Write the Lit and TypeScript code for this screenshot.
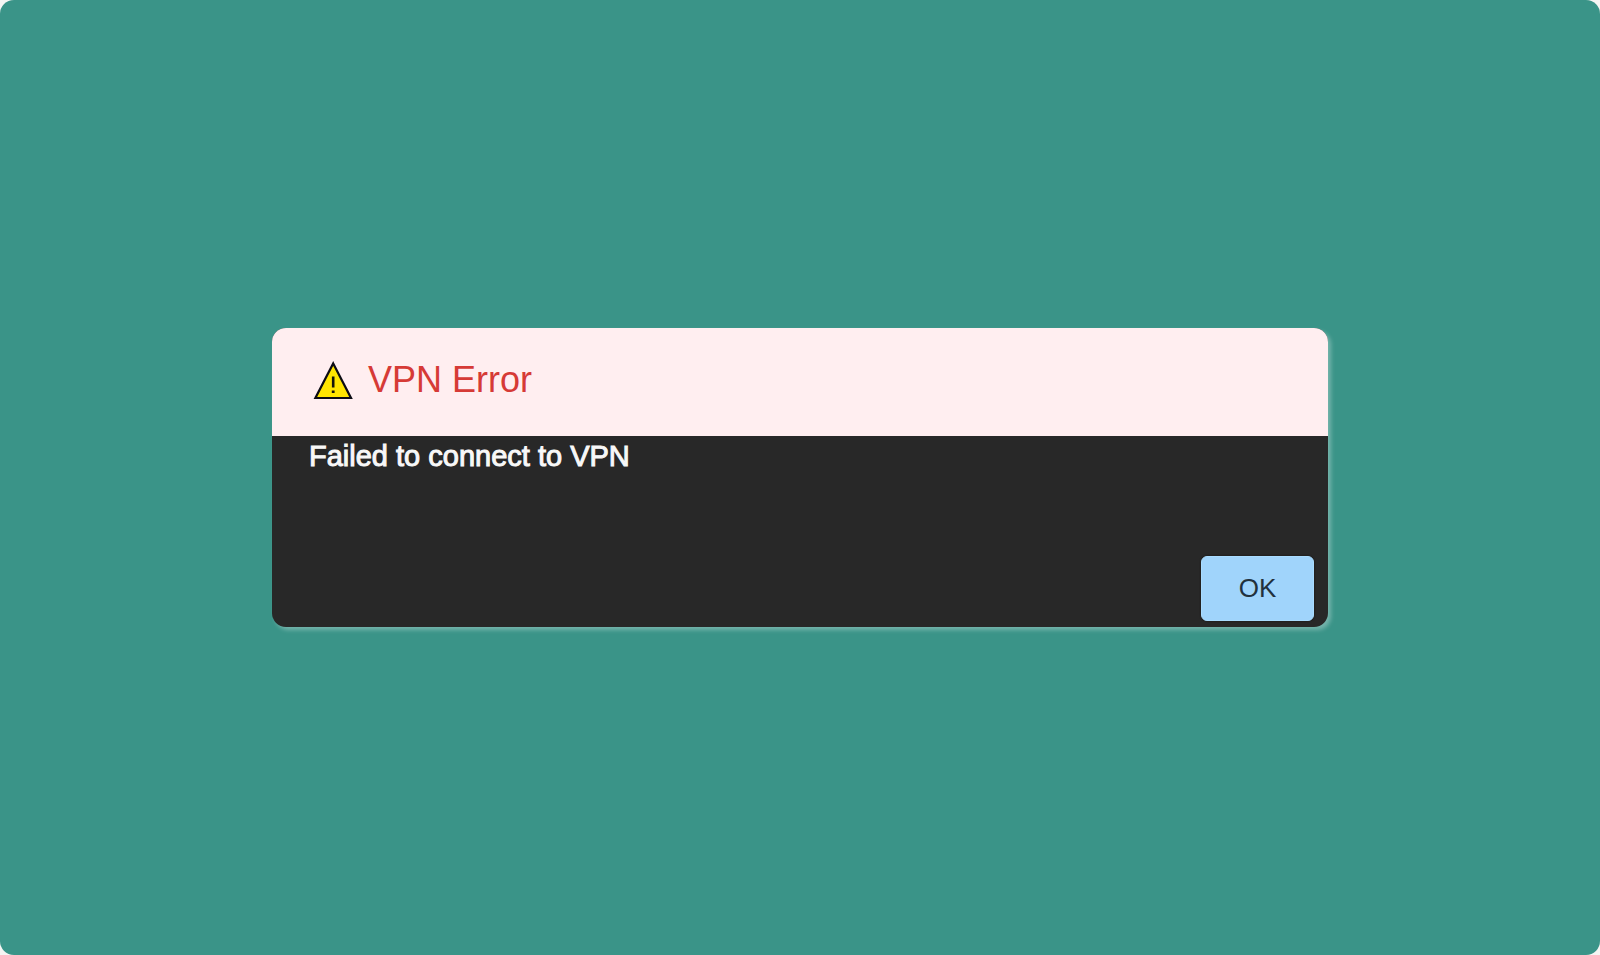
import { LitElement, html, css } from "lit";
import { customElement, property, state } from "lit/decorators.js";

@customElement("error-dialog")
export class ErrorDialog extends LitElement {
  @property() heading = "";
  @property() message = "";

  static styles = css`
    :host {
      display: block;
      width: 66%;
    }
    .dialog {
      border-radius: 14px;
      background: #282828;
      box-shadow: 3px 3px 4px rgba(255, 255, 255, 0.3);
      overflow: hidden;
    }
    .header {
      display: flex;
      align-items: center;
      gap: 14px;
      padding: 31px 40px 35px;
      background: #ffeef0;
    }
    .icon {
      display: block;
      width: 42px;
      height: 42px;
      flex: none;
    }
    .title {
      margin: 0;
      font-size: 36px;
      line-height: 42px;
      font-weight: 400;
      color: #d63a36;
    }
    .message {
      margin: 0;
      padding: 4px 37px 0;
      font-size: 29px;
      line-height: 32px;
      color: #f8f8f8;
      -webkit-text-stroke: 1px #f8f8f8;
    }
    .actions {
      display: flex;
      justify-content: flex-end;
      padding: 84px 14px 6px;
    }
    .ok {
      min-width: 113px;
      height: 65px;
      padding: 0 36px 2px;
      border: 1px solid #a9dcff;
      border-radius: 6px;
      background: #a0d4fb;
      box-shadow: 0 0 2px #15100c;
      font: 400 26px / 32px "Liberation Sans", Arial, sans-serif;
      color: #22313d;
      cursor: pointer;
    }
  `;

  private confirm() {
    this.dispatchEvent(new CustomEvent("confirm"));
  }

  render() {
    return html`
      <section class="dialog" role="alertdialog" aria-labelledby="title" aria-describedby="message">
        <header class="header">
          <svg class="icon" viewBox="0 0 42 42" aria-hidden="true">
            <path d="M21.2 4.5 L39 39 H3.4 Z" fill="#ffe500" stroke="#0c0c14" stroke-width="2.2" />
            <path d="M21.2 17.5 V28.5" stroke="#15150a" stroke-width="2.6" />
            <path d="M19.8 31.5 H22.6 V34 H19.8 Z" fill="#15150a" />
          </svg>
          <h1 class="title" id="title">${this.heading}</h1>
        </header>
        <p class="message" id="message">${this.message}</p>
        <div class="actions">
          <button class="ok" type="button" @click=${this.confirm}>OK</button>
        </div>
      </section>
    `;
  }
}

@customElement("app-root")
export class AppRoot extends LitElement {
  @state() private open = true;

  static styles = css`
    :host {
      display: block;
      background: #f5f5f3;
      font-family: "Liberation Sans", Arial, sans-serif;
    }
    .desktop {
      display: flex;
      align-items: center;
      justify-content: center;
      min-height: 100vh;
      border-radius: 14px;
      background: #3a9488;
    }
  `;

  render() {
    return html`
      <main class="desktop">
        ${this.open
          ? html`<error-dialog
              heading="VPN Error"
              message="Failed to connect to VPN"
              @confirm=${() => (this.open = false)}
            ></error-dialog>`
          : null}
      </main>
    `;
  }
}
